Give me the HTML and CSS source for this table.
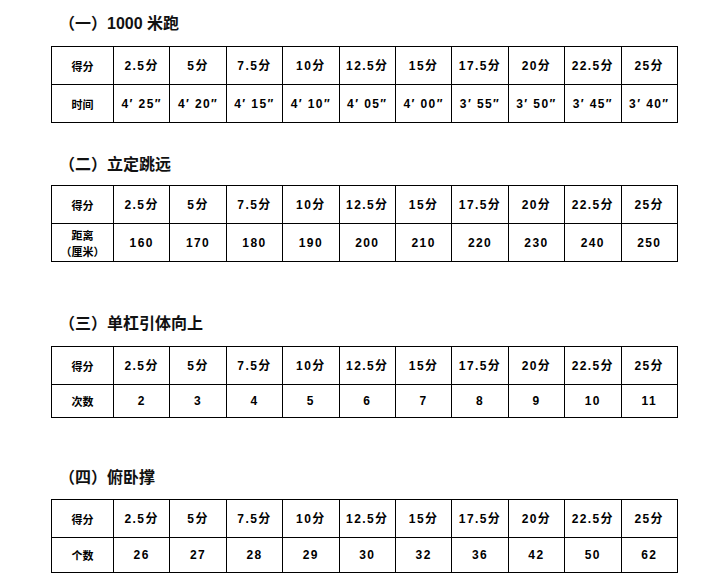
FILE: index.html
```html
<!DOCTYPE html>
<html lang="zh">
<head>
<meta charset="utf-8">
<title>体能测试评分标准</title>
<link rel="stylesheet" href="styles.css">
</head>
<body>
<main class="page">
  <section class="block block-1">
    <h2 class="title">（一）1000 米跑</h2>
    <table class="grid">
      <colgroup><col class="c-head"><col span="10"></colgroup>
      <tr class="row-a"><td class="cjk">得分</td><td>2.5分</td><td>5分</td><td>7.5分</td><td>10分</td><td>12.5分</td><td>15分</td><td>17.5分</td><td>20分</td><td>22.5分</td><td>25分</td></tr>
      <tr class="row-a"><td class="cjk">时间</td><td>4′ 25″</td><td>4′ 20″</td><td>4′ 15″</td><td>4′ 10″</td><td>4′ 05″</td><td>4′ 00″</td><td>3′ 55″</td><td>3′ 50″</td><td>3′ 45″</td><td>3′ 40″</td></tr>
    </table>
  </section>

  <section class="block block-2">
    <h2 class="title">（二）立定跳远</h2>
    <table class="grid">
      <colgroup><col class="c-head"><col span="10"></colgroup>
      <tr class="row-a"><td class="cjk">得分</td><td>2.5分</td><td>5分</td><td>7.5分</td><td>10分</td><td>12.5分</td><td>15分</td><td>17.5分</td><td>20分</td><td>22.5分</td><td>25分</td></tr>
      <tr class="row-a"><td class="cjk two-line">距离<br>（厘米）</td><td>160</td><td>170</td><td>180</td><td>190</td><td>200</td><td>210</td><td>220</td><td>230</td><td>240</td><td>250</td></tr>
    </table>
  </section>

  <section class="block block-3">
    <h2 class="title">（三）单杠引体向上</h2>
    <table class="grid">
      <colgroup><col class="c-head"><col span="10"></colgroup>
      <tr class="row-a"><td class="cjk">得分</td><td>2.5分</td><td>5分</td><td>7.5分</td><td>10分</td><td>12.5分</td><td>15分</td><td>17.5分</td><td>20分</td><td>22.5分</td><td>25分</td></tr>
      <tr class="row-b"><td class="cjk">次数</td><td>2</td><td>3</td><td>4</td><td>5</td><td>6</td><td>7</td><td>8</td><td>9</td><td>10</td><td>11</td></tr>
    </table>
  </section>

  <section class="block block-4">
    <h2 class="title">（四）俯卧撑</h2>
    <table class="grid">
      <colgroup><col class="c-head"><col span="10"></colgroup>
      <tr class="row-a"><td class="cjk">得分</td><td>2.5分</td><td>5分</td><td>7.5分</td><td>10分</td><td>12.5分</td><td>15分</td><td>17.5分</td><td>20分</td><td>22.5分</td><td>25分</td></tr>
      <tr class="row-c"><td class="cjk">个数</td><td>26</td><td>27</td><td>28</td><td>29</td><td>30</td><td>32</td><td>36</td><td>42</td><td>50</td><td>62</td></tr>
    </table>
  </section>
</main>
</body>
</html>
```

FILE: styles.css
```css
html, body {
  margin: 0;
  padding: 0;
  background: #fff;
}

.page {
  padding: 14px 27px 0 51px;
  font-family: "Liberation Sans", "Noto Sans CJK SC", sans-serif;
  color: #000;
}

.block {
  display: flex;
  flex-direction: column;
}

.block-2 { margin-top: 32px; }
.block-3 { margin-top: 52px; }
.block-4 { margin-top: 50px; }

.title {
  margin: 0 0 12px 8px;
  font-size: 16px;
  line-height: 20px;
  font-weight: bold;
  color: #111;
  font-family: "Liberation Sans", "Noto Sans CJK SC", sans-serif;
}

.block-2 .title { margin-bottom: 10px; }
.block-4 .title { margin-bottom: 11px; }

.grid {
  width: 627px;
  border-collapse: collapse;
  table-layout: fixed;
}

.c-head { width: 62px; }

.grid td {
  border: 1px solid #000;
  text-align: center;
  vertical-align: middle;
  padding: 0;
  font-family: "Liberation Sans", "Noto Sans CJK SC", sans-serif;
  font-size: 12px;
  font-weight: bold;
  line-height: 14px;
  letter-spacing: 1.4px;
  white-space: nowrap;
}

.grid td.cjk {
  font-family: "Noto Sans CJK SC", sans-serif;
  font-size: 11px;
  letter-spacing: 0;
}

.row-a td { height: 37px; }
.row-b td { height: 32px; }
.row-c td { height: 34px; }

.grid td.two-line { line-height: 16px; font-size: 11px; }
```
